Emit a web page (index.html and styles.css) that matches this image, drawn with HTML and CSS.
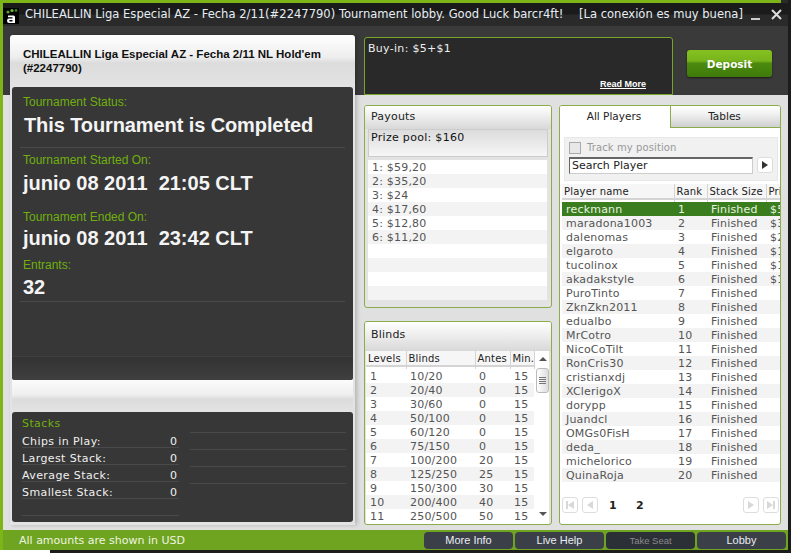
FILE: index.html
```html
<!DOCTYPE html>
<html>
<head>
    <title>Tournament lobby</title>
    <link rel="stylesheet" href="styles.css">
</head>
<body>
    <div class="window">
        <div class="titlebar">
            <svg class="logo" width="16" height="16" viewBox="0 0 16 16">
                <rect width="16" height="16" fill="#000"/>
                <circle cx="5" cy="4" r="1.6" fill="#5f9e2e"/>
                <circle cx="9" cy="2.5" r="1.6" fill="#6fb52e"/>
                <circle cx="13" cy="2.5" r="1.4" fill="#3f7a1e"/>
                <path d="M5 7.5h5.5q1.5 0 1.5 1.5v6h-6q-2 0-2-2.2t2-2.3h3.5v-1.2h-4.5z M7 12q-.8 0-.8.7t.8.8h2.5v-1.5z" fill="#fff" fill-rule="evenodd"/>
            </svg>
            <span class="title-text">CHILEALLIN Liga Especial AZ - Fecha 2/11(#2247790) Tournament lobby. Good Luck barcr4ft!</span>
            <span class="conn-text">[La conexión es muy buena]</span>
            <span class="win-min"></span>
            <svg class="win-close" width="11" height="11" viewBox="0 0 11 11">
                <path d="M1 1l9 9M10 1l-9 9" stroke="#ddd" stroke-width="2"/>
            </svg>
        </div>

        <div class="content">
            <div class="left-card">
                <h1 class="card-title">CHILEALLIN Liga Especial AZ - Fecha 2/11 NL Hold'em (#2247790)</h1>
                <div class="info-panel">
                    <div class="info-main">
                        <div class="info-block first">
                            <div class="info-label">Tournament Status:</div>
                            <div class="info-value status">This Tournament is Completed</div>
                        </div>
                        <div class="info-block started">
                            <div class="info-label">Tournament Started On:</div>
                            <div class="info-value">junio 08 2011&nbsp; 21:05 CLT</div>
                        </div>
                        <div class="info-block ended">
                            <div class="info-label">Tournament Ended On:</div>
                            <div class="info-value">junio 08 2011&nbsp; 23:42 CLT</div>
                        </div>
                        <div class="info-block entrants">
                            <div class="info-label">Entrants:</div>
                            <div class="info-value">32</div>
                        </div>
                    </div>
                    <div class="info-foot"></div>
                </div>
                <div class="card-gap"></div>
                <div class="stacks">
                    <div class="stacks-left">
                        <div class="stacks-title">Stacks</div>
                        <div class="stack-row"><span>Chips in Play:</span><span>0</span></div>
                        <div class="stack-row"><span>Largest Stack:</span><span>0</span></div>
                        <div class="stack-row"><span>Average Stack:</span><span>0</span></div>
                        <div class="stack-row"><span>Smallest Stack:</span><span>0</span></div>
                        <div class="stack-row"></div>
                    </div>
                    <div class="stacks-right">
                        <div class="stack-row"></div>
                        <div class="stack-row"></div>
                        <div class="stack-row"></div>
                    </div>
                </div>
            </div>

            <div class="right-area">
                <div class="top-row">
                    <div class="buyin">
                        <div>Buy-in: $5+$1</div>
                        <a class="read-more">Read More</a>
                    </div>
                    <button class="deposit">Deposit</button>
                </div>
                <div class="bottom-row">
                    <div class="mid-col">
                        <div class="box payouts">
                            <div class="box-title">Payouts</div>
                            <div class="prize-pool">Prize pool: $160</div>
                            <div class="payout-list">
                                <div>1: $59,20</div>
                                <div>2: $35,20</div>
                                <div>3: $24</div>
                                <div>4: $17,60</div>
                                <div>5: $12,80</div>
                                <div>6: $11,20</div>
                                <div></div>
                                <div></div>
                                <div></div>
                                <div></div>
                            </div>
                        </div>
                        <div class="box blinds">
                            <div class="box-title">Blinds</div>
                            <div class="blinds-body">
                                <table class="grid blinds-table">
                                    <colgroup><col class="c-level"><col class="c-blinds"><col class="c-antes"><col class="c-min"></colgroup>
                                    <thead>
                                        <tr><th>Levels</th><th>Blinds</th><th>Antes</th><th>Min.</th></tr>
                                    </thead>
                                    <tbody>
                                        <tr><td>1</td><td>10/20</td><td>0</td><td>15</td></tr>
                                        <tr><td>2</td><td>20/40</td><td>0</td><td>15</td></tr>
                                        <tr><td>3</td><td>30/60</td><td>0</td><td>15</td></tr>
                                        <tr><td>4</td><td>50/100</td><td>0</td><td>15</td></tr>
                                        <tr><td>5</td><td>60/120</td><td>0</td><td>15</td></tr>
                                        <tr><td>6</td><td>75/150</td><td>0</td><td>15</td></tr>
                                        <tr><td>7</td><td>100/200</td><td>20</td><td>15</td></tr>
                                        <tr><td>8</td><td>125/250</td><td>25</td><td>15</td></tr>
                                        <tr><td>9</td><td>150/300</td><td>30</td><td>15</td></tr>
                                        <tr><td>10</td><td>200/400</td><td>40</td><td>15</td></tr>
                                        <tr><td>11</td><td>250/500</td><td>50</td><td>15</td></tr>
                                    </tbody>
                                </table>
                                <div class="scrollbar">
                                    <span class="arrow-up"></span>
                                    <div class="thumb"><i></i><i></i><i></i><i></i></div>
                                    <span class="arrow-down"></span>
                                </div>
                            </div>
                        </div>
                    </div>

                    <div class="box players">
                        <div class="tabs">
                            <div class="tab active">All Players</div>
                            <div class="tab">Tables</div>
                        </div>
                        <div class="search-box">
                            <div class="track"><span class="checkbox"></span>Track my position</div>
                            <div class="search-row">
                                <div class="search-input">Search Player</div>
                                <div class="go-btn"><span class="tri-right"></span></div>
                            </div>
                        </div>
                        <table class="grid players-table">
                            <colgroup><col class="c-name"><col class="c-rank"><col class="c-stack"><col class="c-prize"></colgroup>
                            <thead>
                                <tr><th>Player name</th><th>Rank</th><th>Stack Size</th><th>Prize</th></tr>
                            </thead>
                            <tbody>
                                <tr class="selected"><td>reckmann</td><td>1</td><td>Finished</td><td>$59,20</td></tr>
                                <tr><td>maradona1003</td><td>2</td><td>Finished</td><td>$35,20</td></tr>
                                <tr><td>dalenomas</td><td>3</td><td>Finished</td><td>$24</td></tr>
                                <tr><td>elgaroto</td><td>4</td><td>Finished</td><td>$17,60</td></tr>
                                <tr><td>tucolinox</td><td>5</td><td>Finished</td><td>$12,80</td></tr>
                                <tr><td>akadakstyle</td><td>6</td><td>Finished</td><td>$11,20</td></tr>
                                <tr><td>PuroTinto</td><td>7</td><td>Finished</td><td></td></tr>
                                <tr><td>ZknZkn2011</td><td>8</td><td>Finished</td><td></td></tr>
                                <tr><td>edualbo</td><td>9</td><td>Finished</td><td></td></tr>
                                <tr><td>MrCotro</td><td>10</td><td>Finished</td><td></td></tr>
                                <tr><td>NicoCoTilt</td><td>11</td><td>Finished</td><td></td></tr>
                                <tr><td>RonCris30</td><td>12</td><td>Finished</td><td></td></tr>
                                <tr><td>cristianxdj</td><td>13</td><td>Finished</td><td></td></tr>
                                <tr><td>XClerigoX</td><td>14</td><td>Finished</td><td></td></tr>
                                <tr><td>dorypp</td><td>15</td><td>Finished</td><td></td></tr>
                                <tr><td>Juandcl</td><td>16</td><td>Finished</td><td></td></tr>
                                <tr><td>OMGs0FisH</td><td>17</td><td>Finished</td><td></td></tr>
                                <tr><td>deda_</td><td>18</td><td>Finished</td><td></td></tr>
                                <tr><td>michelorico</td><td>19</td><td>Finished</td><td></td></tr>
                                <tr><td>QuinaRoja</td><td>20</td><td>Finished</td><td></td></tr>
                            </tbody>
                        </table>
                        <div class="pager">
                            <div class="page-btn"><span class="bar"></span><span class="tri-left"></span></div>
                            <div class="page-btn"><span class="tri-left"></span></div>
                            <span class="page-num first-num">1</span>
                            <span class="page-num">2</span>
                            <div class="pager-space"></div>
                            <div class="page-btn"><span class="tri-right"></span></div>
                            <div class="page-btn"><span class="tri-right"></span><span class="bar"></span></div>
                        </div>
                    </div>
                </div>
            </div>
        </div>

        <div class="footer">
            <span class="footer-note">All amounts are shown in USD</span>
            <div class="footer-btns">
                <button class="foot-btn">More Info</button>
                <button class="foot-btn">Live Help</button>
                <button class="foot-btn disabled">Take Seat</button>
                <button class="foot-btn">Lobby</button>
            </div>
        </div>
    </div>
</body>
</html>
```

FILE: styles.css
```css
html, body {
    margin: 0;
    height: 100%;
    overflow: hidden;
}
body {
    background: linear-gradient(90deg, #fff 50px, #1c1c1c 50px);
    font-family: "DejaVu Sans", Verdana, sans-serif;
    font-size: 11px;
    color: #333;
}
.window {
    width: 788px;
    height: 550px;
    display: flex;
    flex-direction: column;
    background: #e0e0e0;
    border-left: 3px solid #7db417;
    box-sizing: border-box;
}
.titlebar {
    height: 26px;
    flex: none;
    box-sizing: border-box;
    padding-top: 3px;
    background:
        linear-gradient(90deg, #7db417 778px, #2a2a2a 778px) top / 100% 3px no-repeat,
        linear-gradient(#1b1b1b 0, #1b1b1b 14px, #2a2a2a 15px, #2a2a2a 100%);
    display: flex;
    align-items: center;
    color: #e6eef5;
    font-size: 11.55px;
    white-space: nowrap;
}
.logo {
    flex: none;
    margin: 2px 6px 0 0;
}
.title-text {
    width: 554px;
    flex: none;
    padding-bottom: 2px;
}
.conn-text {
    width: 172px;
    flex: none;
    padding-bottom: 2px;
}
.win-min {
    width: 9px;
    height: 2px;
    background: #ccc;
    margin: 8px 11px 0 0;
    flex: none;
}
.win-close {
    flex: none;
    margin-bottom: 1px;
}
.content {
    flex: 1;
    min-height: 0;
    display: flex;
    gap: 9px;
    box-sizing: border-box;
    padding: 9px 7px 5px 7px;
    background: linear-gradient(#3a3a3a 0, #3a3a3a 69px, #e0e0e0 69px);
}

/* left card */
.left-card {
    width: 345px;
    flex: none;
    display: flex;
    flex-direction: column;
    box-sizing: border-box;
    padding: 0 2px 3px;
    border-radius: 3px 3px 0 0;
    background: linear-gradient(#fff 0, #eee 22px, #dcdcdc 28px, #e3e3e3 52px, #e3e3e3 100%);
    box-shadow: 2px 0 4px rgba(0, 0, 0, 0.2);
}
.card-title {
    height: 52px;
    box-sizing: border-box;
    margin: 0;
    padding: 12px 11px 0;
    font: bold 11.5px/14px "Liberation Sans", Arial, sans-serif;
    color: #111;
}
.info-panel {
    height: 293px;
    flex: none;
    display: flex;
    flex-direction: column;
    background: #373737;
    border-radius: 3px;
}
.info-main {
    flex: 1;
    padding: 7px 8px 0;
}
.info-block {
    font-family: "Liberation Sans", Arial, sans-serif;
    padding: 0 3px;
}
.info-label {
    font-size: 12px;
    line-height: 16px;
    color: #6fb00f;
}
.info-value {
    font-size: 20px;
    font-weight: bold;
    line-height: 24px;
    color: #f4f4f4;
}
.info-value.status {
    padding-left: 1px;
    line-height: 30px;
    letter-spacing: -0.1px;
}
.first {
    height: 53px;
    border-bottom: 1px solid #4a4a4a;
    margin: 0 0 4px;
}
.started {
    height: 57px;
}
.started .info-value {
    padding-top: 3px;
}
.ended {
    height: 48px;
}
.ended .info-value {
    padding-top: 1px;
}
.entrants {
    height: 44px;
    border-bottom: 1px solid #4a4a4a;
}
.entrants .info-value {
    padding-top: 2px;
}
.info-foot {
    height: 23px;
    background: linear-gradient(#333, #3f3f3f);
    border-top: 1px solid #3f3f3f;
    border-radius: 0 0 3px 3px;
}
.card-gap {
    height: 32px;
    flex: none;
    background: linear-gradient(#fcfcfc 0, #eee 15px, #dcdcdc 19px, #e3e3e3 100%);
}
.stacks {
    flex: 1;
    display: flex;
    gap: 11px;
    box-sizing: border-box;
    padding: 3px 7px 0 10px;
    background: #373737;
    border-radius: 3px;
    color: #f0f0f0;
    letter-spacing: 0.4px;
}
.stacks-left, .stacks-right {
    width: 157px;
}
.stacks-title {
    height: 16px;
    line-height: 18px;
    color: #6fb00f;
}
.stacks-right {
    padding-top: 17px;
}
.stacks-right .stack-row:first-child {
    border-top: 1px solid #4a4a4a;
}
.stack-row {
    height: 16px;
    line-height: 22px;
    padding-right: 1px;
    border-bottom: 1px solid #4a4a4a;
    display: flex;
    justify-content: space-between;
}
.stacks-left .stack-row:first-of-type {
    height: 17px;
}

/* right side */
.right-area {
    flex: 1;
    min-width: 0;
    display: flex;
    flex-direction: column;
}
.top-row {
    height: 70px;
    flex: none;
    display: flex;
    align-items: flex-start;
}
.buyin {
    width: 309px;
    height: 58px;
    margin-top: 2px;
    box-sizing: border-box;
    padding: 4px 3px;
    border: 1px solid #76a52a;
    border-radius: 3px 3px 0 0;
    background: #292929;
    color: #eee;
    letter-spacing: 0.3px;
    position: relative;
}
.read-more {
    position: absolute;
    left: 235px;
    top: 40px;
    font: bold 9px/12px "Liberation Sans", Arial, sans-serif;
    letter-spacing: 0;
    color: #fff;
    text-decoration: underline;
}
.deposit {
    width: 85px;
    height: 27px;
    margin: 15px 0 0 14px;
    padding: 0;
    border: 0;
    border-radius: 3px;
    background: linear-gradient(#84c11f 0, #78b41c 40%, #4b8a0e 50%, #3f7a0a 100%);
    box-shadow: 0 1px 2px #1c1c1c;
    color: #fff;
    font: bold 10.5px "DejaVu Sans", Verdana, sans-serif;
}
.bottom-row {
    flex: 1;
    min-height: 0;
    display: flex;
    gap: 7px;
}
.mid-col {
    width: 188px;
    flex: none;
    display: flex;
    flex-direction: column;
    gap: 13px;
}
.box {
    box-sizing: border-box;
    border: 1px solid #8aac4a;
    border-radius: 3px;
    background: #e3e3e3;
    overflow: hidden;
}
.box-title {
    height: 23px;
    box-sizing: border-box;
    padding: 3px 6px 0;
    line-height: 15px;
    letter-spacing: 0.2px;
    color: #222;
    background: linear-gradient(#fff 0, #f0f0f0 40%, #d8d8d8 100%);
}
.payouts {
    height: 203px;
    flex: none;
    padding: 0;
}
.prize-pool {
    height: 28px;
    box-sizing: border-box;
    margin: 0 3px;
    padding: 0 2px;
    line-height: 15px;
    letter-spacing: 0.3px;
    border: 1px solid #ccc;
    background: linear-gradient(#dcdcdc, #f6f6f6);
    color: #111;
}
.payout-list {
    margin: 3px 4px 0 3px;
    background: #fff;
    color: #555;
    letter-spacing: 0.2px;
}
.payout-list div {
    height: 14px;
    line-height: 16px;
    padding-left: 4px;
}
.payout-list div:nth-child(even) {
    background: #f3f3f3;
}
.blinds {
    flex: 1;
    min-height: 0;
}
.blinds .box-title {
    height: 29px;
    padding-top: 5px;
}
.blinds-body {
    display: flex;
    background: #fff;
    height: 174px;
    overflow: hidden;
    margin: 0 2px 0 1px;
}
.grid {
    table-layout: fixed;
    border-collapse: collapse;
    background: #fff;
    color: #555;
}
.grid th {
    height: 18px;
    padding: 0 0 0 2px;
    text-align: left;
    vertical-align: top;
    font-size: 10px;
    line-height: 15px;
    letter-spacing: 0.2px;
    font-weight: normal;
    color: #222;
    background: linear-gradient(#f6f6f6 0, #f6f6f6 14px, #d4d4d4 14px, #d4d4d4 16px, #fff 16px);
    white-space: nowrap;
    overflow: hidden;
    border-right: 1px solid #d4d4d4;
}
.grid td {
    height: 12px;
    line-height: 12px;
    padding: 2px 0 0 4px;
    letter-spacing: 0.2px;
    white-space: nowrap;
    overflow: hidden;
}
.grid tbody tr:nth-child(even) td {
    background: #f3f3f3;
}
.blinds-table {
    width: 168px;
    flex: none;
    align-self: flex-start;
}
.c-level { width: 40px; }
.c-blinds { width: 69px; }
.c-antes { width: 35px; }
.c-min { width: 24px; }
.scrollbar {
    width: 15px;
    flex: none;
    background: #fff;
    position: relative;
}
.arrow-up, .arrow-down {
    position: absolute;
    left: 4px;
    border-left: 4px solid transparent;
    border-right: 4px solid transparent;
}
.arrow-up {
    top: 6px;
    border-bottom: 4px solid #555;
}
.arrow-down {
    top: 161px;
    border-top: 4px solid #555;
}
.thumb {
    position: absolute;
    left: 1px;
    top: 17px;
    width: 13px;
    height: 25px;
    box-sizing: border-box;
    border: 1px solid #bbb;
    border-radius: 3px;
    background: linear-gradient(90deg, #fff, #ddd);
    display: flex;
    flex-direction: column;
    justify-content: center;
    align-items: center;
    gap: 1px;
}
.thumb i {
    display: block;
    width: 7px;
    height: 1px;
    background: #777;
}

/* players */
.players {
    flex: 1;
    min-width: 0;
    background: #fff;
    display: flex;
    flex-direction: column;
}
.tabs {
    height: 22px;
    flex: none;
    display: flex;
}
.tab {
    width: 110px;
    padding-right: 2px;
    text-align: center;
    font-size: 10.5px;
    line-height: 20px;
    color: #222;
    box-sizing: border-box;
}
.tab + .tab {
    border-left: 1px solid #8aac4a;
    border-bottom: 1px solid #8aac4a;
    flex: 1;
    background: linear-gradient(#fff 0, #f0f0f0 40%, #cfcfcf 100%);
}
.tab.active {
    background: #fff;
}
.search-box {
    height: 44px;
    flex: none;
    box-sizing: border-box;
    margin: 9px 2px 3px 4px;
    padding: 3px 4px 0;
    border: 1px solid #e8e8e8;
    background: #f1f1f1;
}
.track {
    height: 13px;
    display: flex;
    align-items: center;
    color: #999;
    font-size: 10px;
    letter-spacing: 0.1px;
}
.checkbox {
    width: 12px;
    height: 12px;
    box-sizing: border-box;
    margin-right: 6px;
    border: 1px solid #aaa;
    background: #e8e8e8;
}
.search-row {
    display: flex;
    gap: 4px;
    margin-top: 3px;
}
.search-input {
    width: 184px;
    height: 17px;
    box-sizing: border-box;
    padding-left: 2px;
    line-height: 13px;
    color: #222;
    background: #fff;
    border: 1px solid #ccc;
    border-top: 2px solid #666;
    border-left: 1px solid #666;
}
.go-btn, .page-btn {
    width: 16px;
    height: 16px;
    display: flex;
    align-items: center;
    justify-content: center;
    box-sizing: border-box;
    background: #fff;
    border: 1px solid #ddd;
    border-radius: 3px;
}
.tri-right, .tri-left {
    display: block;
    border-top: 4px solid transparent;
    border-bottom: 4px solid transparent;
}
.tri-right {
    border-left: 6px solid #d8d8d8;
}
.tri-left {
    border-right: 6px solid #d8d8d8;
}
.go-btn .tri-right {
    border-left-color: #333;
}
.bar {
    display: block;
    width: 2px;
    height: 8px;
    background: #d8d8d8;
}
.players-table {
    width: 219px;
    flex: none;
    margin-left: 2px;
}
.c-name { width: 112px; }
.c-rank { width: 33px; }
.c-stack { width: 59px; }
.c-prize { width: 15px; }
.players-table tr.selected td {
    background: #3a7d1e;
    color: #e8f3e0;
}
.pager {
    display: flex;
    align-items: center;
    margin: 15px 1px 0 2px;
    gap: 4px;
}
.page-num {
    font-weight: bold;
    color: #222;
    width: 23px;
}
.first-num {
    margin-left: 7px;
}
.pager-space {
    flex: 1;
}

/* footer */
.footer {
    height: 20px;
    flex: none;
    display: flex;
    align-items: center;
    justify-content: space-between;
    padding-right: 2px;
    background: #6fa420;
    color: #eef5e0;
}
.footer-note {
    padding-left: 16px;
}
.footer-btns {
    display: flex;
    gap: 2px;
}
.foot-btn {
    width: 89px;
    height: 17px;
    padding: 0;
    border: 0;
    border-radius: 4px;
    background: #3b3f48;
    color: #e8eef2;
    font: 11px "Liberation Sans", Arial, sans-serif;
}
.foot-btn.disabled {
    background: #2b2f36;
    color: #8a8a8a;
    font-size: 9.5px;
}
```
